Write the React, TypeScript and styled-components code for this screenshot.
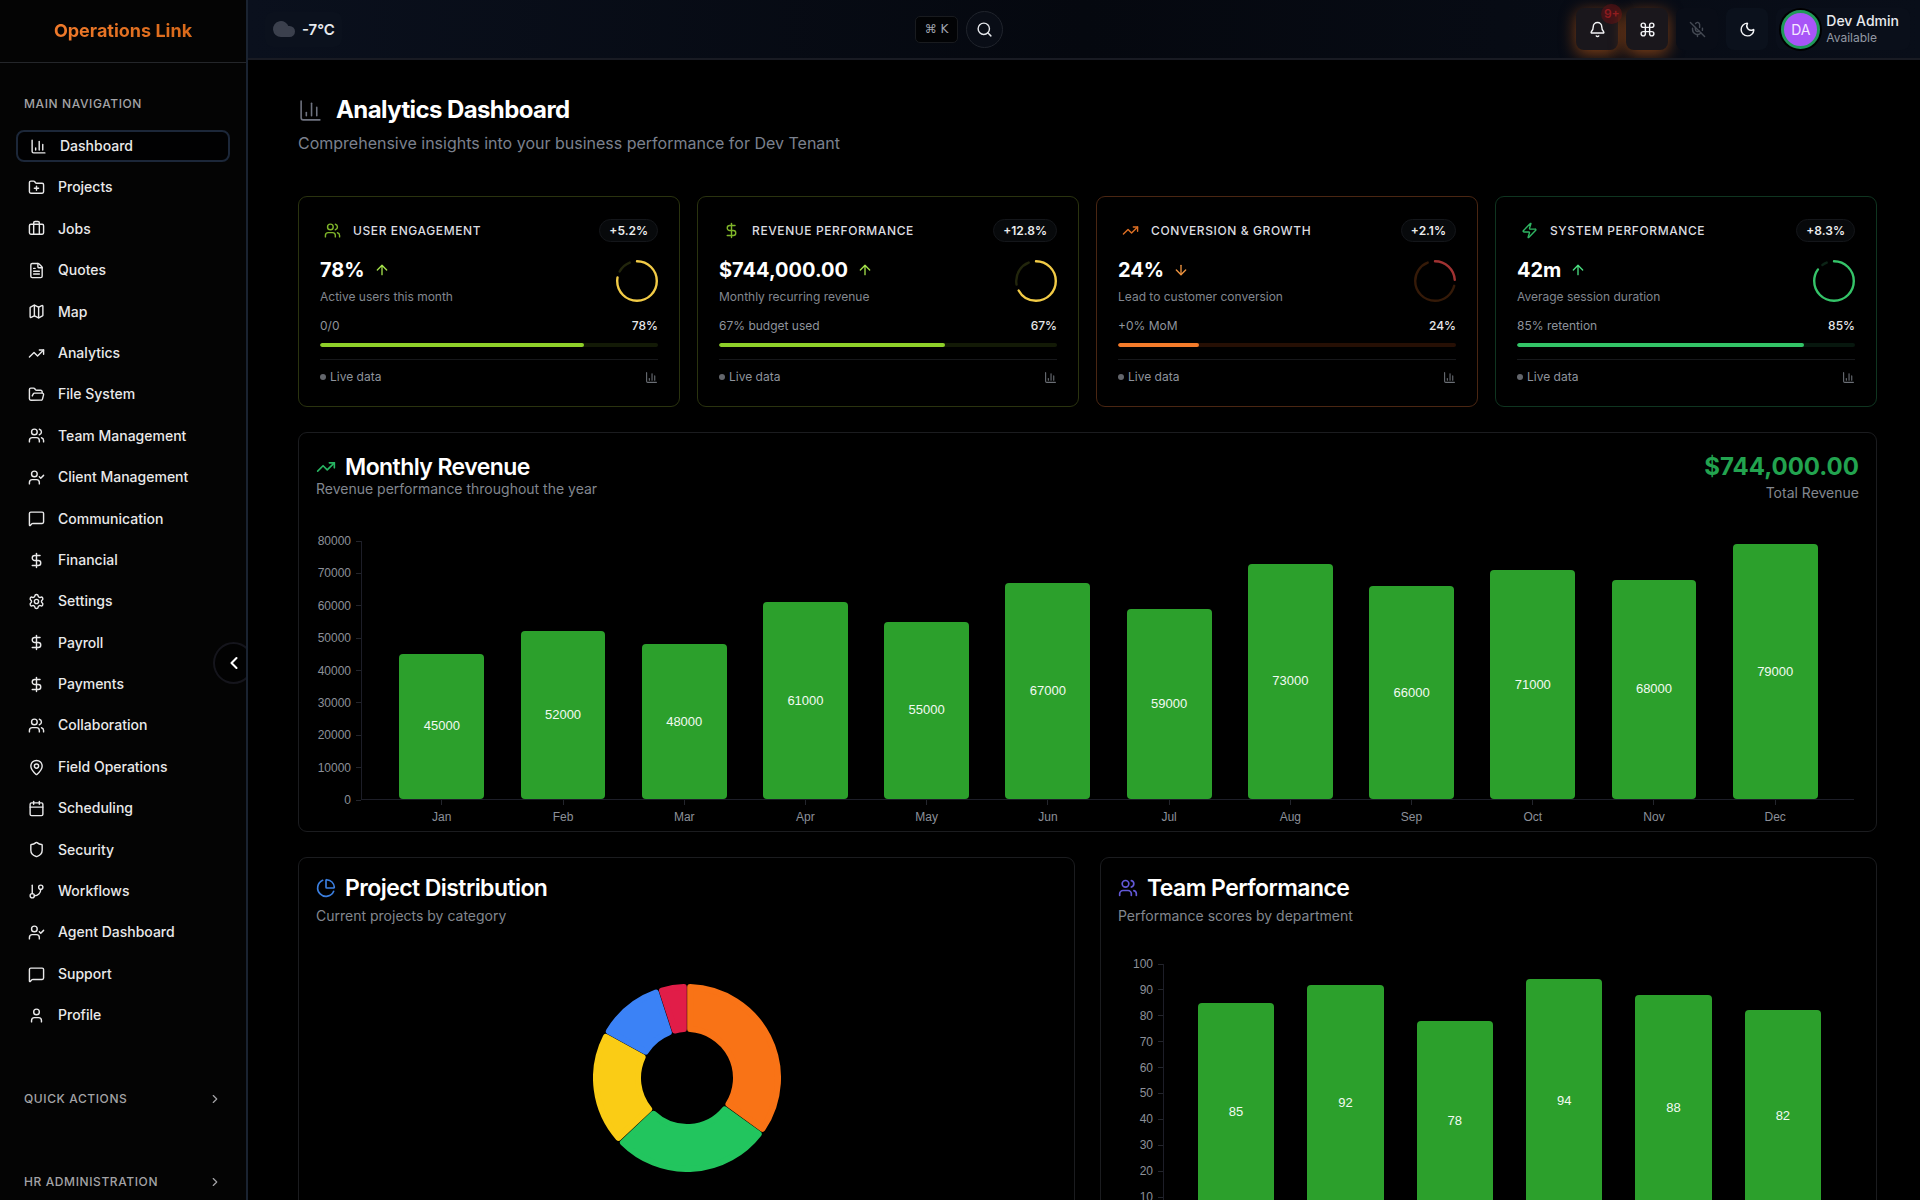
import React from "react";
import styled, { createGlobalStyle } from "styled-components";
import {
  ArrowDown,
  ArrowUp,
  Bell,
  Briefcase,
  Calendar,
  ChartColumn,
  ChartPie,
  ChevronLeft,
  ChevronRight,
  Cloud,
  Command,
  DollarSign,
  FileText,
  FolderOpen,
  FolderPlus,
  GitBranch,
  Map as MapIcon,
  MapPin,
  MessageSquare,
  MicOff,
  Moon,
  Search,
  Settings,
  Shield,
  TrendingUp,
  User,
  UserCheck,
  Users,
  Zap,
  type LucideIcon,
} from "lucide-react";

const GlobalStyle = createGlobalStyle`
  *, *::before, *::after { box-sizing: border-box; }
  body {
    margin: 0;
    background: #000;
    color: #fff;
    font-family: Inter, "Liberation Sans", sans-serif;
    font-size: 14px;
  }
  button { font: inherit; color: inherit; cursor: pointer; }
  h1, h2, h3, p { margin: 0; }
  a { color: inherit; text-decoration: none; }
`;

const Shell = styled.div`
  display: flex;
  height: 100vh;
  overflow: hidden;
`;

/* ---------- Sidebar ---------- */

const Sidebar = styled.aside`
  position: relative;
  flex: 0 0 248px;
  overflow: hidden;
  background: #040404;
  border-right: 2px solid #1a2331;
`;

const Brand = styled.div`
  display: flex;
  align-items: center;
  justify-content: center;
  height: 63px;
  padding-bottom: 2px;
  border-bottom: 1px solid #24262a;
  font-size: 18px;
  font-weight: 700;
`;

const BrandText = styled.span`
  background: linear-gradient(90deg, #f07a2b, #d9691a);
  background-clip: text;
  color: transparent;
`;

const SidebarBody = styled.div`
  padding: 29px 16px 0;
`;

const GroupTitle = styled.h2`
  padding: 0 8px;
  font-size: 12px;
  line-height: 24px;
  font-weight: 500;
  letter-spacing: 0.05em;
  color: #a3a3a6;
`;

const Nav = styled.nav`
  margin: 14px 0 55px;
`;

const NavList = styled.ul`
  display: flex;
  flex-direction: column;
  gap: 9px;
  margin: 0;
  padding: 0;
  list-style: none;
`;

const NavLink = styled.a<{ $active?: boolean }>`
  display: flex;
  align-items: center;
  gap: 13px;
  padding: ${(p) => (p.$active ? "3px 12px" : "5px 12px")};
  border: ${(p) => (p.$active ? "2px solid #1c2739" : "none")};
  border-radius: 8px;
  background: ${(p) => (p.$active ? "#010102" : "transparent")};
  font-size: 14px;
  line-height: 1.6;
  font-weight: 500;
  color: #e9e9ea;
`;

const GroupToggle = styled.button`
  display: flex;
  align-items: center;
  justify-content: space-between;
  width: 100%;
  margin-bottom: 59px;
  padding: 0 8px;
  border: 0;
  background: none;
  font-size: 12px;
  line-height: 24px;
  font-weight: 500;
  letter-spacing: 0.05em;
  color: #a3a3a6;
`;

const CollapseButton = styled.button`
  position: absolute;
  top: 642px;
  right: -8px;
  display: grid;
  place-items: center;
  width: 41px;
  height: 42px;
  padding: 0;
  border: 2px solid #15151c;
  border-radius: 50%;
  background: #020202;
`;

/* ---------- Top bar ---------- */

const Content = styled.div`
  display: flex;
  flex: 1;
  flex-direction: column;
  min-width: 0;
`;

const TopBar = styled.header`
  display: flex;
  align-items: center;
  justify-content: space-between;
  flex: 0 0 60px;
  padding: 0 10px 0 17px;
  overflow: hidden;
  border-bottom: 2px solid #191b23;
  background: linear-gradient(90deg, #0a101d, #05080f 50%, #090e19);
`;

const Weather = styled.div`
  display: flex;
  align-items: center;
  gap: 6px;
  height: 35px;
  padding: 0 7px;
  border-radius: 8px;
  background: #0b111d;
  font-size: 15px;
  font-weight: 600;
  color: #e8eaee;
`;

const SearchGroup = styled.div`
  display: flex;
  align-items: center;
  gap: 8px;
`;

const Shortcut = styled.kbd`
  height: 27px;
  padding: 0 9px;
  border: 1px solid #191b1f;
  border-radius: 5px;
  background: #020305;
  font-family: "DejaVu Sans", sans-serif;
  font-size: 12px;
  line-height: 25px;
  color: #a0a5b0;
`;

const SearchButton = styled.button`
  display: grid;
  place-items: center;
  width: 37px;
  height: 37px;
  padding: 0;
  border: 1px solid #20242c;
  border-radius: 50%;
  background: #090d16;
  color: #e5e7eb;
`;

const Actions = styled.div`
  display: flex;
  align-items: center;
  gap: 8px;
`;

const ActionButton = styled.button<{ $tone: "glow" | "muted" | "plain" }>`
  position: relative;
  display: grid;
  place-items: center;
  width: 42px;
  height: 42px;
  padding: 0;
  border: 0;
  border-radius: 8px;
  background: ${(p) => (p.$tone === "glow" ? "#1a171c" : p.$tone === "plain" ? "#0b111c" : "#090d17")};
  box-shadow: ${(p) => (p.$tone === "glow" ? "0 4px 16px rgba(249, 115, 22, 0.5)" : "none")};
  color: ${(p) => (p.$tone === "muted" ? "#444953" : "#f3f4f6")};
`;

const Badge = styled.span`
  position: absolute;
  top: -4px;
  right: -4px;
  width: 21px;
  height: 20px;
  border-radius: 10px;
  background: rgba(92, 16, 20, 0.6);
  font-size: 12px;
  line-height: 20px;
  font-weight: 600;
  text-align: center;
  color: #8f1c20;
`;

const Account = styled.button`
  display: flex;
  align-items: center;
  gap: 6px;
  height: 42px;
  padding: 0 11px 0 5px;
  border: 0;
  border-radius: 8px;
  background: #0a0f1a;
  text-align: left;
`;

const Avatar = styled.span`
  display: grid;
  place-items: center;
  width: 39px;
  height: 39px;
  border: 3px solid #21995a;
  border-radius: 50%;
  background: #a855f7;
  box-shadow: 0 0 0 2px #000;
  font-size: 14px;
  color: #f5e9ff;
`;

const AccountText = styled.span`
  display: flex;
  flex-direction: column;
`;

const AccountName = styled.span`
  font-size: 14px;
  line-height: 18px;
  font-weight: 500;
  color: #e8eaee;
`;

const AccountStatus = styled.span`
  font-size: 12px;
  line-height: 16px;
  color: #9298a3;
`;

/* ---------- Page ---------- */

const Main = styled.main`
  flex: 1;
  min-height: 0;
  padding: 34px 43px 40px 50px;
  overflow-y: auto;
  scrollbar-width: none;
`;

const PageTitle = styled.div`
  display: flex;
  align-items: center;
  gap: 13px;
  color: #6f7380;

  h1 {
    font-size: 24px;
    line-height: 32px;
    font-weight: 700;
    letter-spacing: -0.025em;
    color: #fff;
  }
`;

const PageSubtitle = styled.p`
  margin-top: 4px;
  font-size: 16px;
  line-height: 26px;
  color: #7b818e;
`;

const StatGrid = styled.section`
  display: grid;
  grid-template-columns: repeat(4, 1fr);
  gap: 17px;
  margin-top: 40px;
`;

const StatCard = styled.article<{ $border: string }>`
  padding: 22px 21px 19px;
  border: 1px solid ${(p) => p.$border};
  border-radius: 9px;
`;

const StatHead = styled.div<{ $color: string }>`
  display: flex;
  align-items: center;
  gap: 12px;
  height: 23px;
  padding-left: 4px;
  color: ${(p) => p.$color};

  h2 {
    flex: 1;
    font-size: 12px;
    line-height: 20px;
    font-weight: 500;
    letter-spacing: 0.05em;
    color: #dcdde0;
  }
`;

const Delta = styled.span`
  padding: 0 9px;
  border: 1px solid #14161a;
  border-radius: 12px;
  background: #07090b;
  font-size: 12px;
  line-height: 21px;
  font-weight: 600;
  color: #eceded;
`;

const StatBody = styled.div`
  display: flex;
  align-items: flex-start;
  justify-content: space-between;
  margin-top: 14px;
`;

const StatValue = styled.div<{ $color: string }>`
  display: flex;
  align-items: center;
  gap: 9px;
  font-size: 20px;
  line-height: 28px;
  font-weight: 700;

  svg {
    color: ${(p) => p.$color};
  }
`;

const StatNote = styled.p`
  margin-top: 3px;
  font-size: 12px;
  line-height: 20px;
  color: #82878f;
`;

const StatRow = styled.div`
  display: flex;
  justify-content: space-between;
  margin-top: 9px;
  font-size: 12px;
  line-height: 20px;
  color: #8e939c;

  strong {
    font-weight: 500;
    color: #e6e7e9;
  }
`;

const Track = styled.div<{ $track: string; $fill: string }>`
  height: 4px;
  margin-top: 7px;
  overflow: hidden;
  border-radius: 2px;
  background: ${(p) => p.$track};

  div {
    height: 100%;
    border-radius: 2px;
    background: ${(p) => p.$fill};
  }
`;

const StatFoot = styled.div`
  display: flex;
  align-items: center;
  justify-content: space-between;
  margin-top: 12px;
  padding-top: 7px;
  border-top: 1px solid #17181b;
  font-size: 12px;
  line-height: 20px;
  color: #6b6f76;
`;

const Live = styled.span`
  display: flex;
  align-items: center;
  gap: 4px;
  color: #8e939c;

  &::before {
    content: "";
    width: 6px;
    height: 6px;
    border-radius: 50%;
    background: #63666c;
  }
`;

const Panel = styled.section`
  margin-top: 25px;
  padding: 18px 17px 6px;
  border: 1px solid #1b1c1f;
  border-radius: 9px;
`;

const PanelPair = styled.div`
  display: grid;
  grid-template-columns: 1fr 1fr;
  column-gap: 25px;
`;

const PanelHead = styled.div`
  display: flex;
  align-items: center;
  justify-content: space-between;
`;

const PanelTitle = styled.div<{ $color: string }>`
  display: flex;
  align-items: center;
  gap: 9px;
  color: ${(p) => p.$color};

  h2 {
    font-size: 23px;
    line-height: 24px;
    font-weight: 600;
    letter-spacing: -0.025em;
    color: #fff;
  }
`;

const PanelNote = styled.p<{ $spaced?: boolean }>`
  margin-top: ${(p) => (p.$spaced ? "6px" : "0")};
  font-size: 14px;
  line-height: 20px;
  color: #82878f;
`;

const Total = styled.div`
  text-align: right;

  strong {
    display: block;
    font-size: 24px;
    line-height: 32px;
    font-weight: 700;
    color: #22a34f;
  }
`;

/* ---------- Bar chart ---------- */

const Chart = styled.div`
  display: grid;
  grid-template-columns: 45px 1fr;
  padding: 38px 5px 0 0;
  font-family: "Liberation Sans", Arial, sans-serif;
  font-size: 12px;
  line-height: 16px;
  color: #8c9099;
`;

const YAxis = styled.div`
  display: flex;
  flex-direction: column;
  justify-content: space-between;
  margin: -8px 0;
`;

const YTick = styled.span`
  display: flex;
  align-items: center;
  justify-content: flex-end;
  gap: 5px;

  &::after {
    content: "";
    width: 5px;
    height: 1px;
    background: #23252c;
  }
`;

const Plot = styled.div`
  display: flex;
  align-items: flex-end;
  justify-content: space-evenly;
  height: 259px;
  padding-left: 1px;
  border-left: 1px solid #1d1e28;
  border-bottom: 1px solid #1d1e28;
`;

const Bar = styled.div`
  display: grid;
  place-items: center;
  border-radius: 4px;
  background: #2ca02c;
  font-size: 13px;
  color: #f2faf2;
`;

const XAxis = styled.div`
  display: flex;
  grid-column: 2;
  justify-content: space-evenly;
  padding-left: 2px;
`;

const XTick = styled.span`
  display: flex;
  flex-direction: column;
  align-items: center;
  gap: 4px;

  &::before {
    content: "";
    width: 1px;
    height: 5px;
    background: #23252c;
  }
`;

type BarChartProps = { values: number[]; labels?: string[]; max: number; step: number };

function BarChart({ values, labels, max, step }: BarChartProps) {
  const ticks = Array.from({ length: max / step + 1 }, (_, i) => max - i * step);
  // Bars take 70% of a band; the gaps and both edges take the other 30%.
  const width = `${700 / (values.length * 10 + 3)}%`;
  return (
    <Chart>
      <YAxis>
        {ticks.map((t) => (
          <YTick key={t}>{t}</YTick>
        ))}
      </YAxis>
      <Plot>
        {values.map((v, i) => (
          <Bar key={i} style={{ width, height: `${(v / max) * 100}%` }}>
            {v}
          </Bar>
        ))}
      </Plot>
      {labels && (
        <XAxis>
          {labels.map((l) => (
            <XTick key={l} style={{ width }}>
              {l}
            </XTick>
          ))}
        </XAxis>
      )}
    </Chart>
  );
}

/* ---------- Donut chart ---------- */

const DonutWrap = styled.div`
  display: flex;
  justify-content: center;
  padding: 58px 0;
`;

const SLICES = [
  { value: 35, color: "#f97316" },
  { value: 28, color: "#22c55e" },
  { value: 20, color: "#facc15" },
  { value: 12, color: "#3b82f6" },
  { value: 5, color: "#e11d48" },
];

function slicePath(from: number, to: number) {
  const inset = 3.2;
  const outer = 94 - 3;
  const inner = 46 + 3;
  const point = (r: number, a: number) => `${94 + r * Math.sin(a)} ${94 - r * Math.cos(a)}`;
  const a0 = from * 2 * Math.PI;
  const a1 = to * 2 * Math.PI;
  const o = Math.asin(inset / outer);
  const n = Math.asin(inset / inner);
  return [
    `M${point(outer, a0 + o)}`,
    `A${outer} ${outer} 0 0 1 ${point(outer, a1 - o)}`,
    `L${point(inner, a1 - n)}`,
    `A${inner} ${inner} 0 0 0 ${point(inner, a0 + n)}Z`,
  ].join(" ");
}

function Donut() {
  let start = 0;
  return (
    <DonutWrap>
      <svg width="188" height="188" viewBox="0 0 188 188" role="img" aria-label="Project distribution">
        {SLICES.map((s) => {
          const from = start / 100;
          start += s.value;
          return (
            <path
              key={s.color}
              d={slicePath(from, start / 100)}
              fill={s.color}
              stroke={s.color}
              strokeWidth="6"
              strokeLinejoin="round"
            />
          );
        })}
      </svg>
    </DonutWrap>
  );
}

/* ---------- Stat gauge ---------- */

const GaugeBox = styled.div`
  display: flex;
  padding-top: 4px;
`;

function Gauge({ value, color, track }: { value: number; color: string; track: string }) {
  const trackStart = value + 5;
  return (
    <GaugeBox>
      <svg width="42" height="42" viewBox="0 0 42 42" fill="none" strokeWidth="2.4" strokeLinecap="round" aria-hidden="true">
        <g transform="rotate(-90 21 21)">
          <circle
            cx="21"
            cy="21"
            r="19.8"
            pathLength="100"
            stroke={track}
            strokeDasharray={`${94 - trackStart} 100`}
            strokeDashoffset={-trackStart}
          />
          <circle cx="21" cy="21" r="19.8" pathLength="100" stroke={color} strokeDasharray={`${value} 100`} />
        </g>
      </svg>
    </GaugeBox>
  );
}

/* ---------- Data ---------- */

const NAV: { label: string; icon: LucideIcon }[] = [
  { label: "Dashboard", icon: ChartColumn },
  { label: "Projects", icon: FolderPlus },
  { label: "Jobs", icon: Briefcase },
  { label: "Quotes", icon: FileText },
  { label: "Map", icon: MapIcon },
  { label: "Analytics", icon: TrendingUp },
  { label: "File System", icon: FolderOpen },
  { label: "Team Management", icon: Users },
  { label: "Client Management", icon: UserCheck },
  { label: "Communication", icon: MessageSquare },
  { label: "Financial", icon: DollarSign },
  { label: "Settings", icon: Settings },
  { label: "Payroll", icon: DollarSign },
  { label: "Payments", icon: DollarSign },
  { label: "Collaboration", icon: Users },
  { label: "Field Operations", icon: MapPin },
  { label: "Scheduling", icon: Calendar },
  { label: "Security", icon: Shield },
  { label: "Workflows", icon: GitBranch },
  { label: "Agent Dashboard", icon: UserCheck },
  { label: "Support", icon: MessageSquare },
  { label: "Profile", icon: User },
];

const LIME = { icon: "#7fb52a", arrow: "#a3e04a", fill: "#8ecf29", track: "#131a06", border: "#2a330f", gauge: "#f2cb46", gaugeTrack: "#22260c" };
const ORANGE = { icon: "#dd6f24", arrow: "#ef9440", fill: "#f47b2a", track: "#260f04", border: "#4a2612", gauge: "#a03232", gaugeTrack: "#351a08" };
const GREEN = { icon: "#2fb562", arrow: "#4ade80", fill: "#33c467", track: "#07170e", border: "#0f3520", gauge: "#35c469", gaugeTrack: "#0c2416" };

const STATS = [
  { title: "USER ENGAGEMENT", icon: Users, delta: "+5.2%", value: "78%", up: true, note: "Active users this month", detail: "0/0", percent: 78, tone: LIME },
  { title: "REVENUE PERFORMANCE", icon: DollarSign, delta: "+12.8%", value: "$744,000.00", up: true, note: "Monthly recurring revenue", detail: "67% budget used", percent: 67, tone: LIME },
  { title: "CONVERSION & GROWTH", icon: TrendingUp, delta: "+2.1%", value: "24%", up: false, note: "Lead to customer conversion", detail: "+0% MoM", percent: 24, tone: ORANGE },
  { title: "SYSTEM PERFORMANCE", icon: Zap, delta: "+8.3%", value: "42m", up: true, note: "Average session duration", detail: "85% retention", percent: 85, tone: GREEN },
];

const MONTHS = ["Jan", "Feb", "Mar", "Apr", "May", "Jun", "Jul", "Aug", "Sep", "Oct", "Nov", "Dec"];
const REVENUE = [45000, 52000, 48000, 61000, 55000, 67000, 59000, 73000, 66000, 71000, 68000, 79000];
const TEAM_SCORES = [85, 92, 78, 94, 88, 82];

export default function App() {
  return (
    <>
      <GlobalStyle />
      <Shell>
        <Sidebar>
          <Brand>
            <BrandText>Operations Link</BrandText>
          </Brand>
          <SidebarBody>
            <GroupTitle>MAIN NAVIGATION</GroupTitle>
            <Nav aria-label="Main navigation">
              <NavList>
                {NAV.map(({ label, icon: Icon }, i) => (
                  <li key={label}>
                    <NavLink href="#" $active={i === 0}>
                      <Icon size={17} />
                      {label}
                    </NavLink>
                  </li>
                ))}
              </NavList>
            </Nav>
            <GroupToggle type="button" aria-expanded="false">
              QUICK ACTIONS
              <ChevronRight size={14} />
            </GroupToggle>
            <GroupToggle type="button" aria-expanded="false">
              HR ADMINISTRATION
              <ChevronRight size={14} />
            </GroupToggle>
          </SidebarBody>
          <CollapseButton type="button" aria-label="Collapse sidebar">
            <ChevronLeft size={20} strokeWidth={2.5} />
          </CollapseButton>
        </Sidebar>

        <Content>
          <TopBar>
            <Weather>
              <Cloud size={24} fill="#3b404d" color="#3b404d" />
              -7°C
            </Weather>
            <SearchGroup>
              <Shortcut>⌘ K</Shortcut>
              <SearchButton type="button" aria-label="Search">
                <Search size={17} />
              </SearchButton>
            </SearchGroup>
            <Actions>
              <ActionButton type="button" $tone="glow" aria-label="Notifications">
                <Bell size={17} />
                <Badge>9+</Badge>
              </ActionButton>
              <ActionButton type="button" $tone="glow" aria-label="Command menu">
                <Command size={17} />
              </ActionButton>
              <ActionButton type="button" $tone="muted" aria-label="Microphone off">
                <MicOff size={17} />
              </ActionButton>
              <ActionButton type="button" $tone="plain" aria-label="Dark mode">
                <Moon size={17} />
              </ActionButton>
              <Account type="button">
                <Avatar>DA</Avatar>
                <AccountText>
                  <AccountName>Dev Admin</AccountName>
                  <AccountStatus>Available</AccountStatus>
                </AccountText>
              </Account>
            </Actions>
          </TopBar>

          <Main>
            <PageTitle>
              <ChartColumn size={25} strokeWidth={1.5} />
              <h1>Analytics Dashboard</h1>
            </PageTitle>
            <PageSubtitle>Comprehensive insights into your business performance for Dev Tenant</PageSubtitle>

            <StatGrid>
              {STATS.map(({ title, icon: Icon, delta, value, up, note, detail, percent, tone }) => (
                <StatCard key={title} $border={tone.border}>
                  <StatHead $color={tone.icon}>
                    <Icon size={17} />
                    <h2>{title}</h2>
                    <Delta>{delta}</Delta>
                  </StatHead>
                  <StatBody>
                    <div>
                      <StatValue $color={tone.arrow}>
                        {value}
                        {up ? <ArrowUp size={16} /> : <ArrowDown size={16} />}
                      </StatValue>
                      <StatNote>{note}</StatNote>
                    </div>
                    <Gauge value={percent} color={tone.gauge} track={tone.gaugeTrack} />
                  </StatBody>
                  <StatRow>
                    <span>{detail}</span>
                    <strong>{percent}%</strong>
                  </StatRow>
                  <Track $track={tone.track} $fill={tone.fill}>
                    <div style={{ width: `${percent}%` }} />
                  </Track>
                  <StatFoot>
                    <Live>Live data</Live>
                    <ChartColumn size={13} />
                  </StatFoot>
                </StatCard>
              ))}
            </StatGrid>

            <Panel>
              <PanelHead>
                <div>
                  <PanelTitle $color="#27b562">
                    <TrendingUp size={20} />
                    <h2>Monthly Revenue</h2>
                  </PanelTitle>
                  <PanelNote>Revenue performance throughout the year</PanelNote>
                </div>
                <Total>
                  <strong>$744,000.00</strong>
                  <PanelNote>Total Revenue</PanelNote>
                </Total>
              </PanelHead>
              <BarChart values={REVENUE} labels={MONTHS} max={80000} step={10000} />
            </Panel>

            <PanelPair>
              <Panel>
                <PanelTitle $color="#3b7fe0">
                  <ChartPie size={20} />
                  <h2>Project Distribution</h2>
                </PanelTitle>
                <PanelNote $spaced>Current projects by category</PanelNote>
                <Donut />
              </Panel>
              <Panel>
                <PanelTitle $color="#6258d6">
                  <Users size={20} />
                  <h2>Team Performance</h2>
                </PanelTitle>
                <PanelNote $spaced>Performance scores by department</PanelNote>
                <BarChart values={TEAM_SCORES} max={100} step={10} />
              </Panel>
            </PanelPair>
          </Main>
        </Content>
      </Shell>
    </>
  );
}
